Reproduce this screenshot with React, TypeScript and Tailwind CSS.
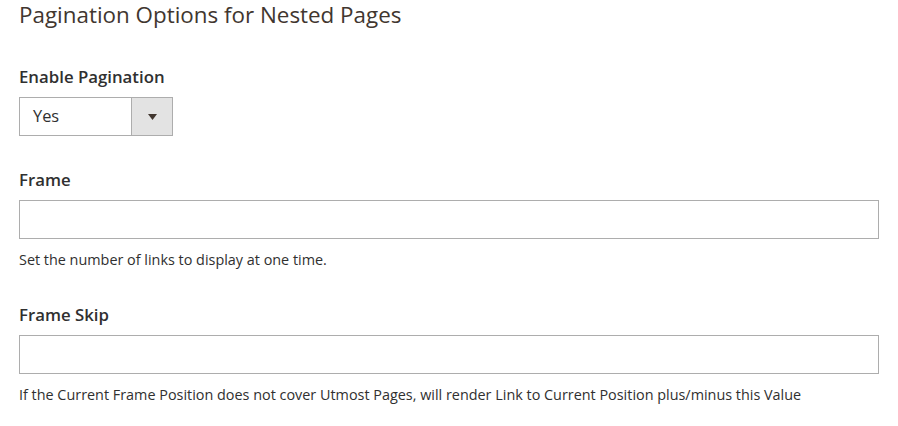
import React from "react";

const Field = ({ label, help, className }: { label: string; help?: string; className?: string }) => {
    return (
        <div className={className}>
            <div className="text-[16.8px] leading-[22px] font-semibold text-[#303030]">{label}</div>
            <div className="mt-[9px] h-[39px] w-full border border-[#adadad] bg-white"></div>
            {help && <div className="mt-[11px] text-[14.4px] leading-[20px] text-[#303030]">{help}</div>}
        </div>
    );
};

const App = () => {
    return (
        <div className="w-[898px] h-[426px] bg-white pl-[19px] pr-[19px]" style={{ fontFamily: '"Open Sans", sans-serif' }}>
            <h1 className="text-[22.4px] leading-[30px] font-normal text-[#41362f]">Pagination Options for Nested Pages</h1>
            <div className="mt-[36px]">
                <div className="text-[16.8px] leading-[22px] font-semibold text-[#303030]">Enable Pagination</div>
                <div className="mt-[9px] flex h-[39px] w-[154px] border border-[#adadad] bg-white">
                    <div className="flex flex-1 items-center pl-[13px] text-[16.4px] text-[#303030]">Yes</div>
                    <div className="flex w-[41px] items-center justify-center border-l border-[#adadad] bg-[#e3e3e3]">
                        <svg width="9" height="6" viewBox="0 0 9 6">
                            <path d="M0 0 L9 0 L4.5 6 Z" fill="#41362f" />
                        </svg>
                    </div>
                </div>
            </div>
            <Field className="mt-[33px]" label="Frame" help="Set the number of links to display at one time." />
            <Field
                className="mt-[34px]"
                label="Frame Skip"
                help="If the Current Frame Position does not cover Utmost Pages, will render Link to Current Position plus/minus this Value"
            />
        </div>
    );
};

export default App;
